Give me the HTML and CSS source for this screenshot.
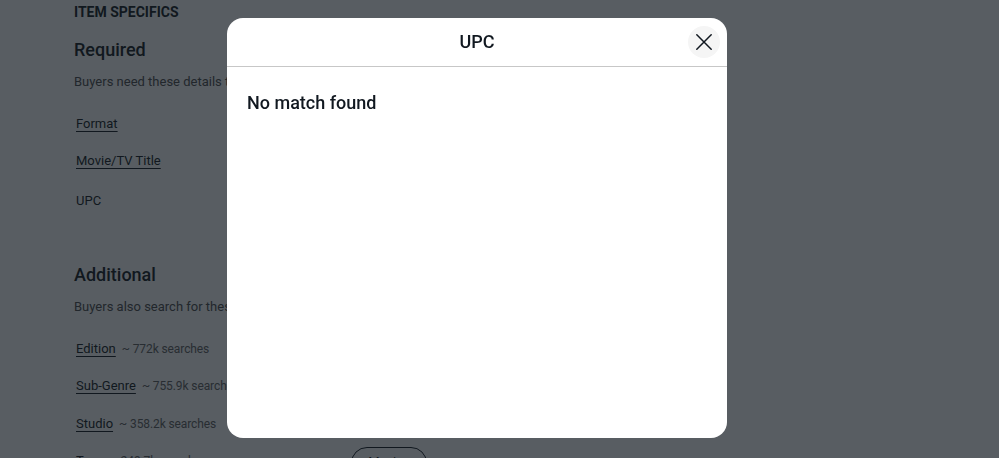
FILE: index.html
```html
<!DOCTYPE html>
<html lang="en">
<head>
<meta charset="utf-8">
<title>Item specifics - UPC</title>
<link rel="stylesheet" href="styles.css">
</head>
<body>
<main class="page">
  <h3 class="eyebrow">ITEM SPECIFICS</h3>
  <section class="group">
    <h2 class="group-title">Required</h2>
    <p class="group-desc">Buyers need these details to find your item.</p>
    <ul class="specs">
      <li class="spec"><span class="spec-name">Format</span></li>
      <li class="spec spec-tall"><span class="spec-name">Movie/TV Title</span></li>
      <li class="spec spec-tall"><span class="spec-plain">UPC</span></li>
    </ul>
  </section>
  <section class="group group-additional">
    <h2 class="group-title">Additional</h2>
    <p class="group-desc">Buyers also search for these details.</p>
    <ul class="specs">
      <li class="spec"><span class="spec-name">Edition</span><span class="spec-count">~ 772k searches</span></li>
      <li class="spec spec-mid"><span class="spec-name">Sub-Genre</span><span class="spec-count">~ 755.9k searches</span></li>
      <li class="spec"><span class="spec-name">Studio</span><span class="spec-count">~ 358.2k searches</span></li>
      <li class="spec spec-with-value"><span class="spec-label"><span class="spec-name">Type</span><span class="spec-count">~ 249.7k searches</span></span><span class="chip">Movies</span></li>
    </ul>
  </section>
</main>

<div class="backdrop"></div>

<div class="dialog" role="dialog" aria-label="UPC">
  <header class="dialog-header">
    <h2 class="dialog-title">UPC</h2>
    <button class="dialog-close" aria-label="Close">
      <svg width="18" height="18" viewBox="0 0 18 18" aria-hidden="true"><path d="M1.8 1.8 L16.2 16.2 M16.2 1.8 L1.8 16.2" stroke="#111820" stroke-width="1.5" stroke-linecap="round" fill="none"/></svg>
    </button>
  </header>
  <div class="dialog-body">
    <p class="dialog-message">No match found</p>
  </div>
</div>
</body>
</html>
```

FILE: styles.css
```css
* { box-sizing: border-box; }

html, body {
  margin: 0;
  padding: 0;
  background: #ffffff;
  overflow: hidden;
  height: 100%;
}

body {
  font-family: Roboto, "Liberation Sans", Arial, sans-serif;
  color: #111820;
}

.page {
  padding: 4px 0 0 74px;
}

.eyebrow {
  margin: 0;
  font-size: 14px;
  font-weight: 700;
  line-height: 17px;
}

.group {
  margin-top: 17px;
}

.group-additional {
  margin-top: 33px;
}

.group-title {
  margin: 0;
  font-size: 18px;
  font-weight: 500;
  line-height: 24px;
}

.group-desc {
  margin: 12px 0 0;
  font-size: 13px;
  line-height: 16px;
  color: #4a4a4a;
  white-space: nowrap;
}

.specs {
  list-style: none;
  margin: 23px 0 0;
  padding: 0;
}

.spec {
  height: 37px;
  display: flex;
  align-items: flex-start;
  gap: 6px;
  padding: 3px 0 0 2px;
  font-size: 13px;
  line-height: 16px;
}

.spec-tall { height: 40px; }
.spec-mid { height: 38px; }

.spec-name {
  color: #111820;
  text-decoration: underline;
  text-underline-offset: 3px;
  text-decoration-thickness: 1px;
}

.spec-plain { color: #111820; }

.spec-count {
  color: #5e5e5e;
  font-size: 12px;
  letter-spacing: -0.1px;
}

.spec-label {
  display: flex;
  gap: 6px;
  width: 275px;
  flex: none;
}

.spec-with-value { gap: 0; }

.chip {
  margin-top: -6px;
  display: inline-flex;
  justify-content: center;
  border: 1.5px solid #111820;
  border-radius: 16px;
  padding-top: 6px;
  font-size: 13px;
  height: 34px;
  width: 76px;
}

.backdrop {
  position: fixed;
  inset: 0;
  background: rgba(17, 24, 32, 0.7);
}

.dialog {
  position: fixed;
  top: 18px;
  left: 227px;
  width: 500px;
  height: 420px;
  background: #ffffff;
  border-radius: 16px;
  overflow: hidden;
}

.dialog-header {
  position: relative;
  height: 49px;
  border-bottom: 1px solid #c7c7c7;
  display: flex;
  align-items: center;
  justify-content: center;
}

.dialog-title {
  margin: 0;
  font-size: 18px;
  font-weight: 500;
  line-height: 24px;
  color: #111820;
}

.dialog-close {
  position: absolute;
  top: 8px;
  right: 7px;
  width: 32px;
  height: 32px;
  border-radius: 50%;
  border: 0;
  background: #f5f5f5;
  display: flex;
  align-items: center;
  justify-content: center;
  padding: 0;
}

.dialog-body {
  padding: 24px 20px;
}

.dialog-message {
  margin: 0;
  font-size: 18px;
  font-weight: 500;
  line-height: 24px;
  color: #111820;
}
```
